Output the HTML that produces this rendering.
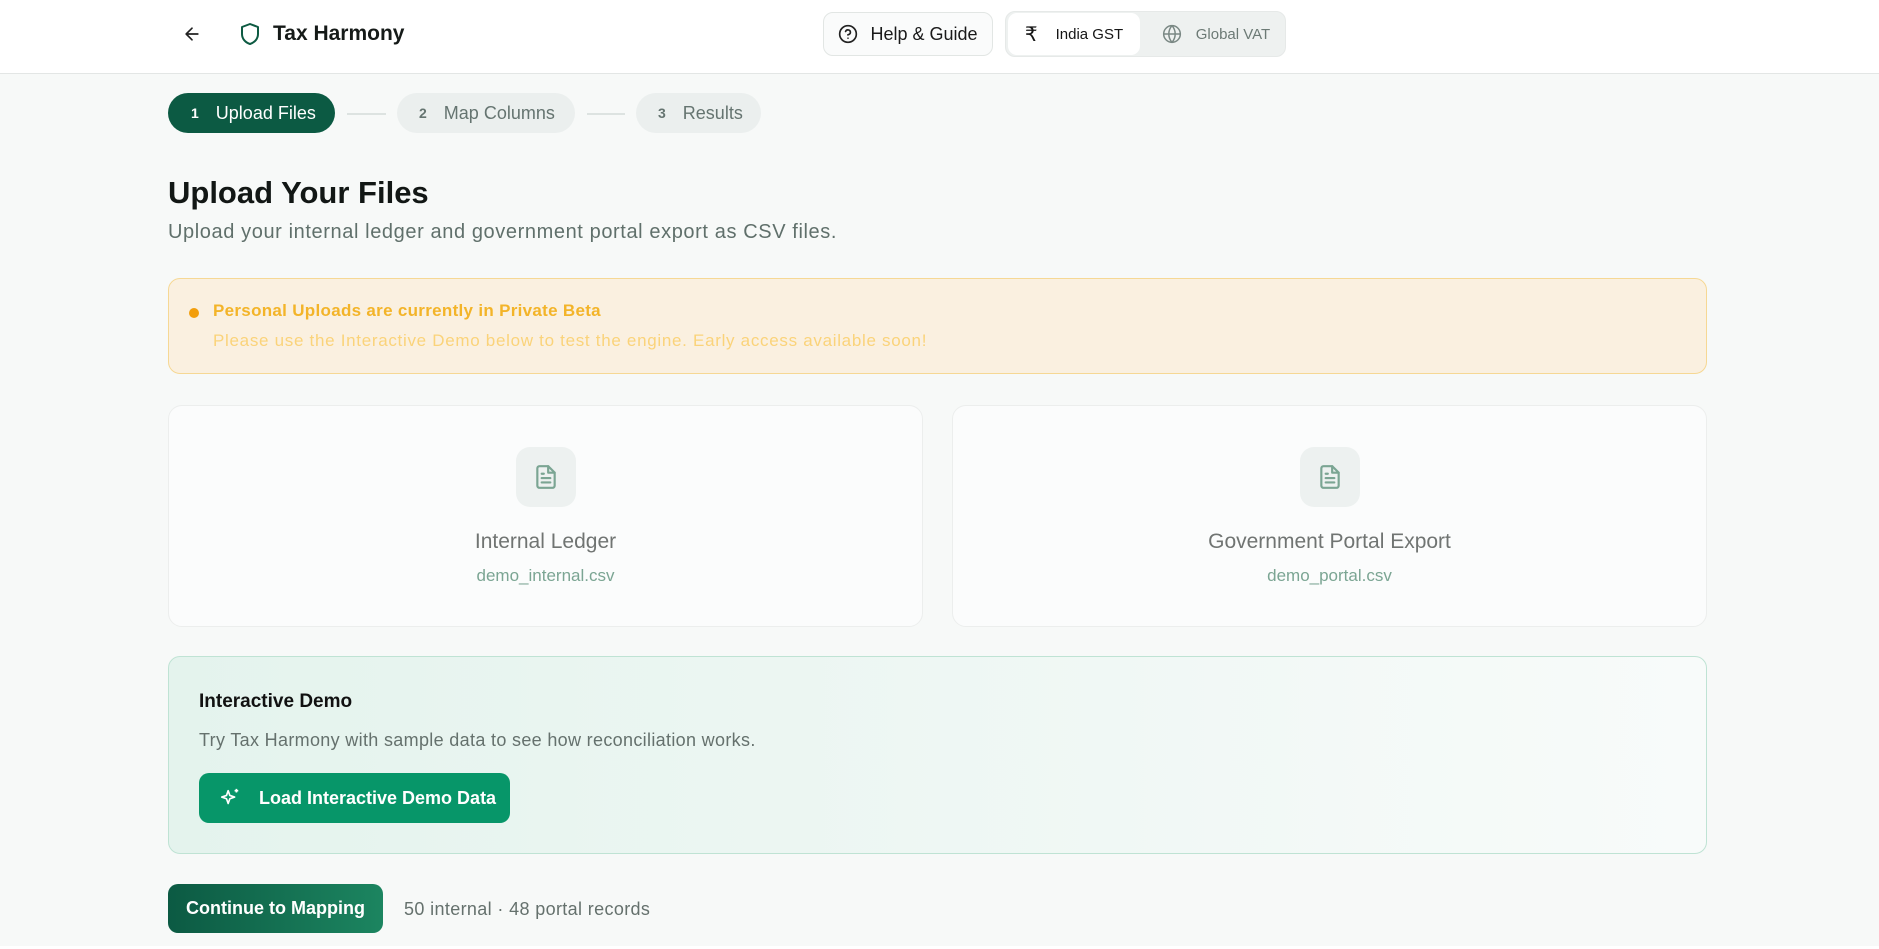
<!DOCTYPE html>
<html><head><meta charset="utf-8"><style>
*{box-sizing:border-box;margin:0;padding:0}
body{width:1879px;height:949px;overflow:hidden;background:#f7f9f8;font-family:"Liberation Sans",sans-serif;position:relative;color:#111}
.abs{position:absolute}
header{position:absolute;left:0;top:0;width:1879px;height:74px;background:#fff;border-bottom:1px solid #e3e6e5}
.btn{position:absolute;display:flex;align-items:center;justify-content:center;border-radius:10px}
.step{position:absolute;top:93px;height:40px;border-radius:20px;display:flex;align-items:center;font-size:18px}
.step b{font-size:14px;margin-right:17px;font-weight:bold}
.line{position:absolute;top:113px;height:2px;background:#dde3e1}
.card{position:absolute;top:405px;width:755px;height:222px;background:#fbfcfc;border:1px solid #eceeed;border-radius:14px;text-align:center}
.ibox{position:absolute;left:347px;top:41px;width:60px;height:60px;border-radius:14px;background:#edf1f0;display:flex;align-items:center;justify-content:center}
.ct{position:absolute;left:0;right:0;top:124px;font-size:21px;color:#707472}
.cf{position:absolute;left:0;right:0;top:160px;font-size:17px;color:#7ba593}
</style></head><body>
<header>
<svg class="abs" style="left:182px;top:24px" width="20" height="20" viewBox="0 0 24 24" fill="none" stroke="#222" stroke-width="2" stroke-linecap="round" stroke-linejoin="round"><path d="M19 12H5M12 19l-7-7 7-7"/></svg>
<svg class="abs" style="left:238px;top:21px" width="24" height="26" viewBox="0 0 24 24" fill="none" stroke="#0d5a42" stroke-width="2" stroke-linejoin="round"><path d="M12 2l8 3v7c0 5-3.5 8.5-8 10-4.5-1.5-8-5-8-10V5z"/></svg>
<div class="abs" style="left:273px;top:22px;font-size:21px;font-weight:bold;color:#151a18">Tax Harmony</div>
<div class="btn" style="left:823px;top:12px;width:170px;height:44px;border:1px solid #e2e6e4;background:#fafbfb;font-size:18px;color:#1a1a1a">
<svg width="20" height="20" viewBox="0 0 24 24" fill="none" stroke="#222" stroke-width="2" stroke-linecap="round" style="margin-right:12px"><circle cx="12" cy="12" r="10"/><path d="M9.1 9a3 3 0 0 1 5.8 1c0 2-3 3-3 3M12 17h.01"/></svg>Help &amp; Guide</div>
<div class="abs" style="left:1005px;top:11px;width:281px;height:46px;border-radius:10px;background:#eef1f0;border:1px solid #e6e9e8"></div>
<div class="btn" style="left:1008px;top:13px;width:132px;height:42px;background:#fff;font-size:15px;color:#151515;border-radius:9px"><span style="font-size:20px;margin-right:18px">₹</span>India GST</div>
<div class="btn" style="left:1150px;top:13px;width:132px;height:42px;font-size:15px;color:#6c7a75">
<svg width="20" height="20" viewBox="0 0 24 24" fill="none" stroke="#7a8884" stroke-width="1.8" style="margin-right:14px"><circle cx="12" cy="12" r="10"/><path d="M2 12h20M12 2a15 15 0 0 1 0 20M12 2a15 15 0 0 0 0 20"/></svg>Global VAT</div>
</header>
<div class="step" style="left:168px;width:167px;background:#0c5a43;color:#fff;padding-left:23px"><b>1</b>Upload Files</div>
<div class="line" style="left:347px;width:39px"></div>
<div class="step" style="left:397px;width:178px;background:#ebefee;color:#657470;padding-left:22px"><b>2</b>Map Columns</div>
<div class="line" style="left:587px;width:38px"></div>
<div class="step" style="left:636px;width:125px;background:#ebefee;color:#657470;padding-left:22px"><b>3</b>Results</div>
<div class="abs" style="left:168px;top:175px;font-size:31px;font-weight:bold;color:#121715">Upload Your Files</div>
<div class="abs" style="left:168px;top:221px;font-size:20px;color:#60706b;letter-spacing:0.6px">Upload your internal ledger and government portal export as CSV files.</div>
<div class="abs" style="left:168px;top:278px;width:1539px;height:96px;background:#faf0e0;border:1px solid #f6d894;border-radius:12px"></div>
<div class="abs" style="left:189px;top:308px;width:10px;height:10px;border-radius:50%;background:#f29e0c"></div>
<div class="abs" style="left:213px;top:301px;font-size:17px;font-weight:bold;color:#f3b429;letter-spacing:0.3px">Personal Uploads are currently in Private Beta</div>
<div class="abs" style="left:213px;top:331px;font-size:17px;color:#fad37a;letter-spacing:0.7px">Please use the Interactive Demo below to test the engine. Early access available soon!</div>
<div class="card" style="left:168px"><div class="ibox"><svg width="26" height="28" viewBox="0 0 24 24" fill="none" stroke="#7ba593" stroke-width="2" stroke-linejoin="round" stroke-linecap="round"><path d="M14 2H6a2 2 0 0 0-2 2v16a2 2 0 0 0 2 2h12a2 2 0 0 0 2-2V8z"/><path d="M14 2v6h6M16 13H8M16 17H8M10 9H8"/></svg></div><div class="ct">Internal Ledger</div><div class="cf">demo_internal.csv</div></div>
<div class="card" style="left:952px"><div class="ibox"><svg width="26" height="28" viewBox="0 0 24 24" fill="none" stroke="#7ba593" stroke-width="2" stroke-linejoin="round" stroke-linecap="round"><path d="M14 2H6a2 2 0 0 0-2 2v16a2 2 0 0 0 2 2h12a2 2 0 0 0 2-2V8z"/><path d="M14 2v6h6M16 13H8M16 17H8M10 9H8"/></svg></div><div class="ct">Government Portal Export</div><div class="cf">demo_portal.csv</div></div>
<div class="abs" style="left:168px;top:656px;width:1539px;height:198px;border:1px solid #bfe3d4;border-radius:12px;background:linear-gradient(90deg,#e4f3ed,#f8fbfa)"></div>
<div class="abs" style="left:199px;top:691px;font-size:19px;font-weight:bold;color:#111">Interactive Demo</div>
<div class="abs" style="left:199px;top:730px;font-size:18px;color:#65716d;letter-spacing:0.33px">Try Tax Harmony with sample data to see how reconciliation works.</div>
<div class="btn" style="left:199px;top:773px;width:311px;height:50px;background:#079669;color:#fff;font-size:18px;font-weight:bold;justify-content:flex-start;padding-left:20px">
<svg width="22" height="22" viewBox="0 0 24 24" fill="none" stroke="#fff" stroke-width="1.8" stroke-linejoin="round" style="margin-right:18px"><path d="M10 4l1.8 5.2L17 11l-5.2 1.8L10 18l-1.8-5.2L3 11l5.2-1.8z"/><path d="M19 2v4M17 4h4"/></svg>Load Interactive Demo Data</div>
<div class="btn" style="left:168px;top:884px;width:215px;height:49px;background:linear-gradient(90deg,#0c5a43,#1c8560);color:#fff;font-size:18px;font-weight:bold">Continue to Mapping</div>
<div class="abs" style="left:404px;top:899px;font-size:18px;color:#65716d;letter-spacing:0.36px">50 internal · 48 portal records</div>
<div class="abs" style="left:0;top:946px;width:1879px;height:3px;background:#fff"></div>
</body></html>
